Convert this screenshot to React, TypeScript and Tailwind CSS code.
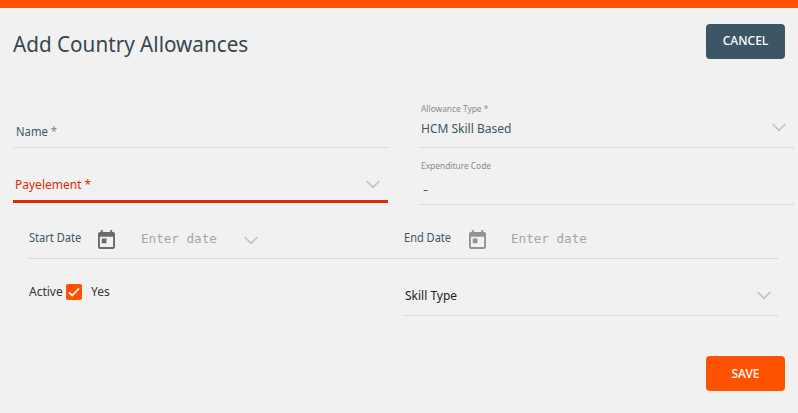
import React from 'react';

function Chevron({ className = '' }: { className?: string }) {
  return (
    <svg viewBox="0 0 14 9" className={`h-[9px] w-[14px] shrink-0 ${className}`} fill="none" stroke="#c2c2c2" strokeWidth="1.6">
      <path d="M0.7 1 L7 7.3 L13.3 1" />
    </svg>
  );
}

function CalendarIcon({ className = '' }: { className?: string }) {
  return (
    <svg viewBox="3 1 18 20" className={`h-[19px] w-[17px] shrink-0 ${className}`} fill="currentColor" preserveAspectRatio="none">
      <path d="M19 3h-1V1h-2v2H8V1H6v2H5c-1.100 0-2 .9-2 2v14c0 1.100.9 2 2 2h14c1.100 0 2-.9 2-2V5c0-1.100-.9-2-2-2zm0 16H5V8h14v11zM7 10h5v5H7z" />
    </svg>
  );
}

export default function App() {
  return (
    <div className="h-[413px] w-[798px] overflow-hidden border-t-8 border-[#ff5200] bg-[#f1f1f1] font-['Noto_Sans',sans-serif] text-[12px] leading-4 text-[#3d5665]">
      <header className="flex h-[90px] items-start justify-between pl-[13px] pr-[13px]">
        <h1 className="mt-[21px] origin-left scale-x-[0.971] whitespace-nowrap text-[21.3px] leading-[30px] text-[#37474f]">Add Country Allowances</h1>
        <button className="mt-4 h-[35px] w-[79px] rounded-[4px] bg-[#3d5665] pb-px text-[12px] font-medium text-white">CANCEL</button>
      </header>

      <div className="flex gap-8 pl-[13px]">
        <div className="w-[375px]">
          <div className="h-[50px] border-b border-[#d9d9d9] pl-[3px] pt-[26px]">
            <div className="w-max origin-left scale-x-[0.94]">
              Name <span className="text-[#858585]">*</span>
            </div>
          </div>
          <div className="flex h-[55px] items-start justify-between border-b-3 border-[#dd2c00] pl-[2px] pr-[8px] pt-[28px] text-[#dd2c00]">
            <span className="mt-px">Payelement *</span>
            <Chevron className="mt-[4px]" />
          </div>
        </div>
        <div className="w-[374px]">
          <div className="flex h-[50px] justify-between border-b border-[#d9d9d9] pl-px pr-[8px] pt-[5px]">
            <div>
              <div className="origin-left scale-x-[0.985] text-[8.5px] leading-3 text-[#8b8b8b]">Allowance Type *</div>
              <div className="mt-[6px] leading-4">HCM Skill Based</div>
            </div>
            <Chevron className="mt-[20px]" />
          </div>
          <div className="h-[57px] border-b border-[#d9d9d9] pl-px pt-[12px]">
            <div className="origin-left scale-x-[0.985] text-[8.5px] leading-3 text-[#8b8b8b]">Expenditure Code</div>
            <div className="ml-[2px] mt-[10px] w-max origin-left scale-x-[1.3] leading-4">-</div>
          </div>
        </div>
      </div>

      <div className="ml-[28px] mr-5 flex h-[54px] items-start border-b border-[#d9d9d9]">
        <div className="flex w-[376px] items-start">
          <div className="mt-[25px] w-[70px] whitespace-nowrap pl-px">
            <div className="w-max origin-left scale-x-[0.92]">Start Date</div>
          </div>
          <CalendarIcon className="mt-[25px] text-[#6b6b6b]" />
          <span className="ml-[26px] mt-[26px] w-[103px] whitespace-nowrap font-['DejaVu_Sans_Mono',monospace] text-[12.6px] text-[#a6a6a6]">Enter date</span>
          <Chevron className="mt-[31px]" />
        </div>
        <div className="flex items-start">
          <div className="mt-[25px] w-[65px] whitespace-nowrap">
            <div className="w-max origin-left scale-x-[0.92]">End Date</div>
          </div>
          <CalendarIcon className="mt-[25px] text-[#929292]" />
          <span className="ml-[25px] mt-[26px] whitespace-nowrap font-['DejaVu_Sans_Mono',monospace] text-[12.6px] text-[#a6a6a6]">Enter date</span>
        </div>
      </div>

      <div className="ml-[28px] mr-5 flex h-[57px] text-[#333333]">
        <div className="flex w-[376px] items-start pt-[25px]">
          <span className="w-[38px] whitespace-nowrap pl-px">Active</span>
          <span className="flex size-4 items-center justify-center rounded-[2px] bg-[#ff5200]">
            <svg viewBox="0 0 12 10" className="h-[10px] w-[12px]" fill="none" stroke="white" strokeWidth="1.7">
              <path d="M1 5.3 L4.200 8.500 L11 1.500" />
            </svg>
          </span>
          <span className="ml-[9px]">Yes</span>
        </div>
        <div className="flex flex-1 items-start justify-between border-b border-[#d9d9d9] pl-px pr-[7px] pt-[28px] text-[#222222]">
          <span className="mt-px">Skill Type</span>
          <Chevron className="mt-[4px]" />
        </div>
      </div>

      <footer className="flex justify-end pr-[13px] pt-[40px]">
        <button className="h-[35px] w-[79px] rounded-[4px] bg-[#ff5200] text-[12px] font-medium text-white">SAVE</button>
      </footer>
    </div>
  );
}
